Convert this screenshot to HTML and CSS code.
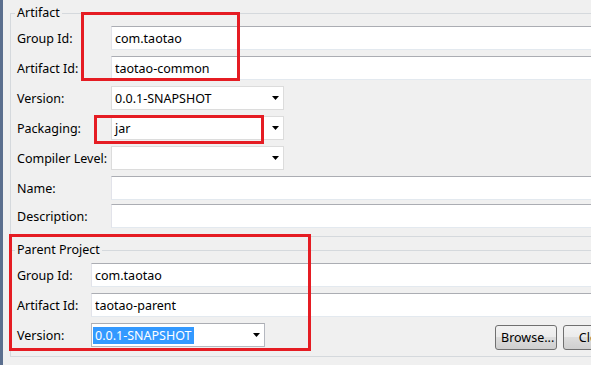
FILE: index.html
```html
<!DOCTYPE html>
<html lang="en">
<head>
    <meta charset="UTF-8">
    <meta name="viewport" content="width=device-width, initial-scale=1.0">
    <title>New Maven Project</title>
    <link rel="stylesheet" href="styles.css">
</head>
<body>
    <div class="window">
        <div class="edge"></div>
        <div class="page">
            <fieldset class="group">
                <legend>Artifact</legend>
                <div class="row"><label>Group Id:</label><input class="text" type="text" value="com.taotao"></div>
                <div class="row"><label>Artifact Id:</label><input class="text" type="text" value="taotao-common"></div>
                <div class="row">
                    <label>Version:</label>
                    <div class="combo"><span class="value">0.0.1-SNAPSHOT</span><svg class="arrow" width="7" height="4" viewBox="0 0 7 4"><polygon points="0,0 7,0 3.5,4" fill="#000"/></svg></div>
                </div>
                <div class="row">
                    <label>Packaging:</label>
                    <div class="combo"><span class="value">jar</span><svg class="arrow" width="7" height="4" viewBox="0 0 7 4"><polygon points="0,0 7,0 3.5,4" fill="#000"/></svg></div>
                </div>
                <div class="row">
                    <label>Compiler Level:</label>
                    <div class="combo"><span class="value"></span><svg class="arrow" width="7" height="4" viewBox="0 0 7 4"><polygon points="0,0 7,0 3.5,4" fill="#000"/></svg></div>
                </div>
                <div class="row"><label>Name:</label><input class="text" type="text" value=""></div>
                <div class="row tight"><label>Description:</label><input class="text" type="text" value=""></div>
            </fieldset>

            <fieldset class="group parent">
                <legend>Parent Project</legend>
                <div class="row"><label>Group Id:</label><input class="text" type="text" value="com.taotao"></div>
                <div class="row"><label>Artifact Id:</label><input class="text" type="text" value="taotao-parent"></div>
                <div class="row">
                    <label>Version:</label>
                    <div class="combo focused"><span class="value"><span class="selected">0.0.1-SNAPSHOT</span></span><svg class="arrow" width="7" height="4" viewBox="0 0 7 4"><polygon points="0,0 7,0 3.5,4" fill="#000"/></svg></div>
                    <div class="buttons">
                        <button class="browse">Browse...</button>
                        <button class="clear">Clear</button>
                    </div>
                </div>
            </fieldset>
        </div>

        <!-- red annotation boxes -->
        <div class="mark mark-ids"></div>
        <div class="mark mark-packaging"></div>
        <div class="mark mark-parent"></div>
    </div>
</body>
</html>
```

FILE: styles.css
```css
* {
    box-sizing: border-box;
}
html, body {
    margin: 0;
    height: 100%;
}
body {
    background: #f0f0f0;
    font-family: "Noto Sans", "Liberation Sans", sans-serif;
    font-size: 12.5px;
    color: #000;
    overflow: hidden;
}
.window {
    position: relative;
    display: flex;
    height: 365px;
}
.edge {
    flex: none;
    width: 3px;
    background: #5b6f8e;
}
.page {
    flex: none;
    width: 720px;
    padding: 5px 0 0 7px;
}
.group {
    margin: 0;
    min-width: 0;
    padding: 5px 0 8px 6px;
    border: 1px solid #d5d9dd;
    border-right: none;
}
.group legend {
    padding: 0 2px;
    margin-left: -2px;
    line-height: 16px;
}
.group.parent {
    margin-top: 5px;
    padding-bottom: 9px;
}
.row {
    display: flex;
    align-items: center;
    height: 24px;
    margin-bottom: 6px;
}
.row:last-child {
    margin-bottom: 0;
}
.row.tight {
    margin-top: -2px;
}
.row label {
    flex: none;
    width: 94px;
}
.parent .row label {
    width: 74px;
}
.text {
    flex: 1;
    height: 24px;
    margin: 0;
    padding: 0 3px;
    font: inherit;
    color: #000;
    background: #fff;
    border: 1px solid #e2e3ea;
    border-top-color: #abadb3;
    border-bottom-color: #e3e9ef;
    outline: none;
}
.combo {
    flex: none;
    display: flex;
    align-items: center;
    width: 173px;
    height: 24px;
    padding-left: 3px;
    background: #fff;
    border: 1px solid #dcdcdc;
}
.combo .value {
    flex: 1;
    white-space: nowrap;
}
.combo .arrow {
    flex: none;
    margin-right: 4px;
}
.combo.focused {
    width: 174px;
    border-color: #b5b8c0;
    border-top-color: #abadb3;
}
.selected {
    display: inline-block;
    margin-left: -2px;
    padding: 0 2px;
    line-height: 17px;
    color: #fff;
    background: #3399ff;
}
.buttons {
    display: flex;
    gap: 6px;
    align-self: flex-start;
    margin: 2px 0 0 230px;
}
button {
    height: 25px;
    padding: 0 5px;
    font: inherit;
    color: #000;
    border: 1px solid #707070;
    border-radius: 3px;
    background: linear-gradient(#f2f2f2 0%, #ebebeb 50%, #dddddd 50%, #cfcfcf 100%);
}
.browse {
    width: 62px;
}
.clear {
    width: 62px;
}
.mark {
    position: absolute;
    border: 3px solid #e51c23;
}
.mark-ids {
    left: 81px;
    top: 12px;
    width: 159px;
    height: 69px;
}
.mark-packaging {
    left: 94px;
    top: 115px;
    width: 170px;
    height: 29px;
}
.mark-parent {
    left: 9px;
    top: 234px;
    width: 302px;
    height: 117px;
}
```
